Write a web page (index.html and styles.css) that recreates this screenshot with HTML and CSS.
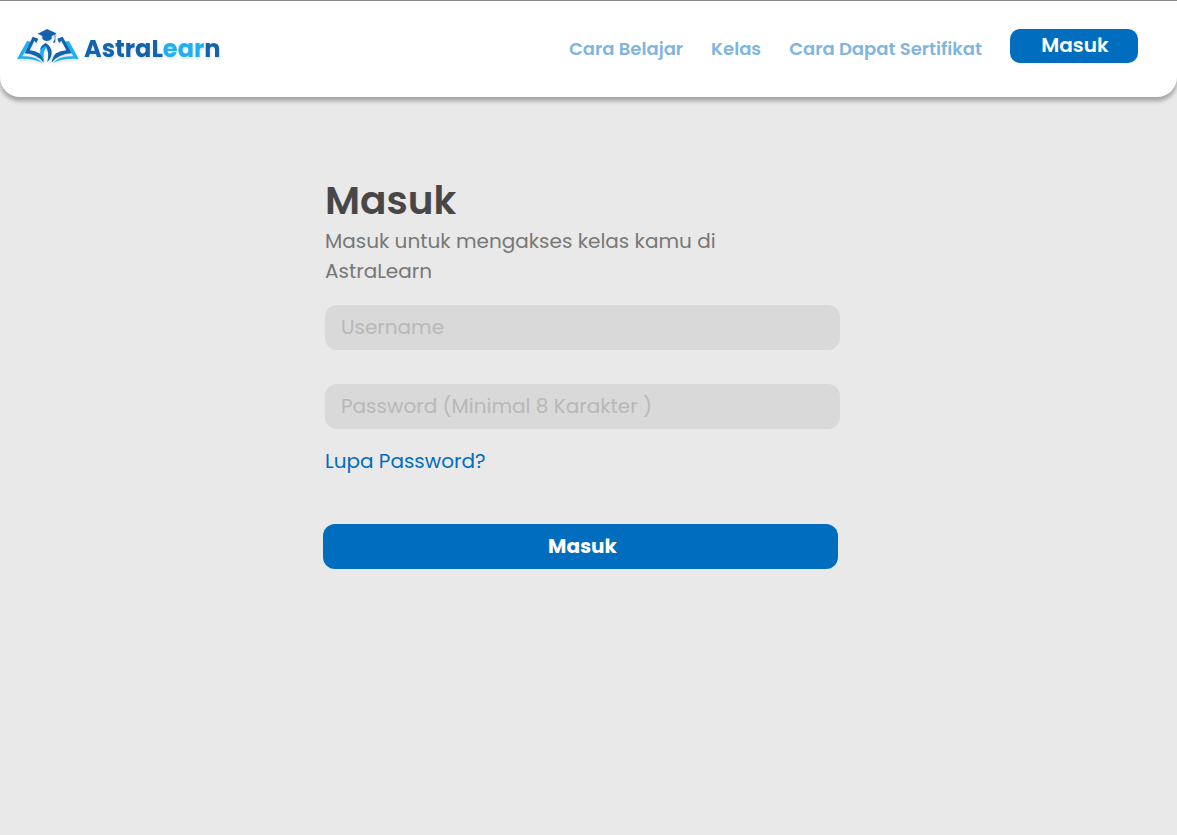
FILE: index.html
```html
<!DOCTYPE html>
<html lang="id">
<head>
<meta charset="utf-8">
<meta name="viewport" content="width=device-width, initial-scale=1">
<title>AstraLearn</title>
<link rel="stylesheet" href="styles.css">
</head>
<body>
<header class="header">
  <a class="brand" href="#">
    <svg class="brand-icon" viewBox="22 26 186 105" aria-hidden="true">
      <g fill="#1fb0f4">
        <path d="M63 64L52 62L22 116Q70 113 99 129Q78 104 38 108L60 70Z"/>
        <path d="M164 64L178 62L207 116Q158 113 129 129Q150 104 191 108L169 70Z"/>
        <path d="M108 70Q91 80 91 98Q92 114 104 123Q97 99 109 82Q120 99 113 123L118 116L121 92Z"/>
      </g>
      <g fill="#1263ad">
        <path d="M80 68L86 55L69 49L45 99Q82 101 102 127Q99 108 89 99Q77 91 60 90L74 61Z"/>
        <path d="M148 68L143 55L159 49L186 99Q146 101 126 127Q129 108 139 99Q152 91 170 90L155 61Z"/>
        <path d="M91 90Q92 76 108 68Q125 78 126 97Q125 114 113 125Q121 96 109 77Q97 80 91 90Z"/>
        <path d="M112 26L140 39L137 42V65Q134 68 130 68L135 56V43L126 47V55Q112 69 98 56V47L84 40Z"/>
      </g>
    </svg>
    <span class="brand-name">Astra<span>L</span><span class="brand-light">ear</span>n</span>
  </a>
  <nav class="nav">
    <a class="nav-link" href="#">Cara Belajar</a>
    <a class="nav-link" href="#">Kelas</a>
    <a class="nav-link" href="#">Cara Dapat Sertifikat</a>
  </nav>
  <button class="header-button" type="button">Masuk</button>
</header>
<main class="main">
  <form class="login">
    <div class="fields">
      <h1 class="title">Masuk</h1>
      <p class="intro">Masuk untuk mengakses kelas kamu di AstraLearn</p>
      <input class="input" type="text" placeholder="Username" aria-label="Username">
      <input class="input" type="password" placeholder="Password (Minimal 8 Karakter )" aria-label="Password">
      <a class="forgot" href="#">Lupa Password?</a>
    </div>
    <button class="submit" type="submit">Masuk</button>
  </form>
</main>
</body>
</html>
```
FILE: styles.css
```css
* {
  box-sizing: border-box;
}

body {
  margin: 0;
  min-height: 100vh;
  background: #e9e9e9;
  font-family: Poppins, Inter, sans-serif;
}

a {
  text-decoration: none;
}

button,
input {
  border: 0;
  font-family: inherit;
}

.header {
  display: flex;
  align-items: flex-start;
  padding: 28px 39px 28px 17px;
  border-top: 1px solid #888;
  border-radius: 0 0 20px 20px;
  background: #fff;
  box-shadow: 0 4px 4px rgba(0, 0, 0, 0.3);
}

.brand {
  display: flex;
  gap: 5px;
  margin-right: auto;
  color: #1263ad;
  filter: drop-shadow(1px 2px 1px rgba(0, 0, 0, 0.1));
}

.brand-icon {
  width: 62px;
  height: 35px;
}

.brand-name {
  font-size: 24px;
  font-weight: 700;
  line-height: 40px;
}

.brand-light {
  color: #1fb0f4;
}

.nav {
  display: flex;
  gap: 28px;
  margin-right: 28px;
}

.nav-link {
  color: #80b5de;
  font-size: 18px;
  font-weight: 600;
  line-height: 39px;
}

.header-button {
  width: 128px;
  height: 34px;
  padding: 0 4px 2px 6px;
  border-radius: 10px;
  background: #006dbe;
  color: #fff;
  font-size: 20px;
  font-weight: 600;
}

.main {
  display: flex;
  justify-content: center;
  padding: 79px 14px 40px 0;
}

.login {
  display: flex;
  flex-direction: column;
  width: 517px;
}

.fields {
  display: flex;
  flex-direction: column;
  padding-left: 2px;
}

.title {
  margin: 0;
  color: #474747;
  font-size: 39px;
  font-weight: 600;
  line-height: 50px;
}

.intro {
  max-width: 440px;
  margin: 0 0 19px;
  color: #777;
  font-size: 20px;
  line-height: 30px;
}

.input {
  width: 100%;
  height: 45px;
  margin-bottom: 34px;
  padding: 0 16px 2px;
  border-radius: 12px;
  background: #d9d9d9;
  color: #474747;
  font-size: 20px;
}

.input::placeholder {
  color: #b8b8b8;
}

.forgot {
  align-self: flex-start;
  margin-top: -17px;
  color: #006dbe;
  font-size: 20px;
  line-height: 30px;
}

.submit {
  height: 45px;
  margin: 48px 2px 0 0;
  padding: 0 4px 2px 8px;
  border-radius: 12px;
  background: #006dbe;
  color: #fff;
  font-size: 20px;
  font-weight: 700;
}
```
